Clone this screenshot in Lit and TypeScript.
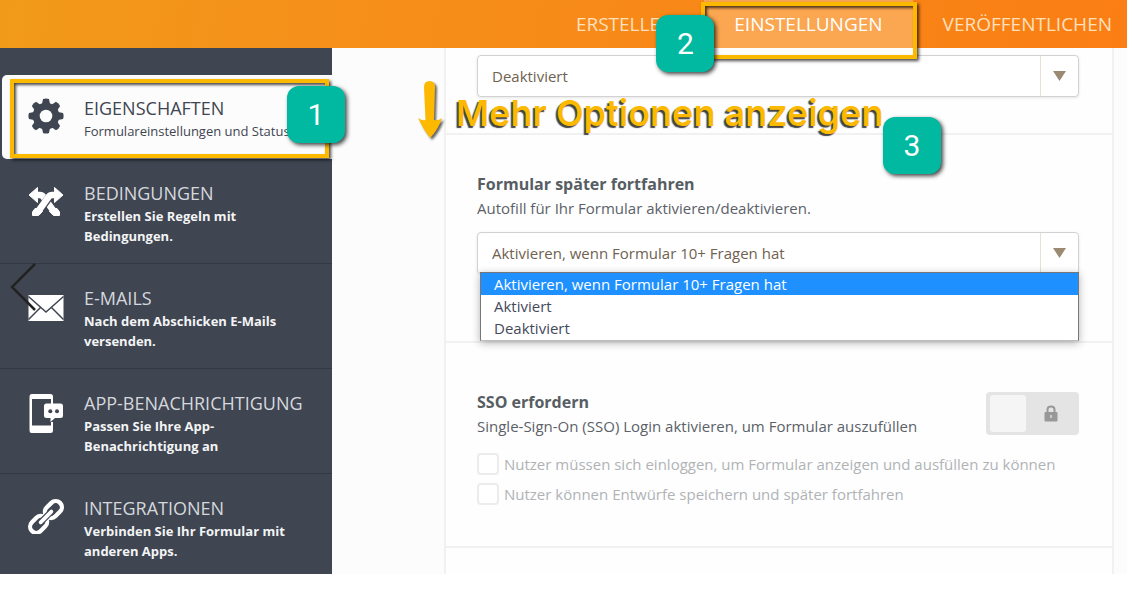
import { LitElement, html, css, svg } from "lit";
import { customElement, property } from "lit/decorators.js";

const icons: Record<string, unknown> = {
  gear: svg`<svg viewBox="0 0 36 36"><g transform="translate(18 18)" fill="currentColor">
    ${[0, 45, 90, 135].map((a) => svg`<path transform="rotate(${a})" d="M-3-17q3-1.200 6 0l1 5v24l-1 5q-3 1.200-6 0l-1-5v-24z"/>`)}
    <circle r="13.300"/></g><circle cx="18" cy="18" r="6.300" fill="#fcfcfc"/></svg>`,
  rules: svg`<svg viewBox="0 -3 36 36"><g fill="none" stroke-linejoin="round">
    <path d="M8 9h4q2 0 3.500 2L27 27" stroke="currentColor" stroke-width="6.500"/>
    <path d="M24 22.500l5 0 2.500 3.500v3.500h-6l-4-4z" fill="currentColor" stroke="currentColor"/>
    <path d="M1 9L9.500 1.500v15z" fill="currentColor" stroke="currentColor"/>
    <path d="M23 10q-1.200 0-2.500 2L13 22.500" stroke="#3f4551" stroke-width="8"/>
    <path d="M28 9h-4q-2 0-3.500 2L9 27" stroke="currentColor" stroke-width="6.500"/>
    <path d="M12 22.500l-5 0-2.500 3.500v3.500h6l4-4z" fill="currentColor" stroke="currentColor"/>
    <path d="M35 9L26.500 1.500v15z" fill="currentColor" stroke="currentColor"/></g></svg>`,
  mail: svg`<svg viewBox="0 0 36 36"><rect x=".5" y="7" width="35" height="26" fill="currentColor"/>
    <path d="M.5 8.500L18 24L35.500 8.500M.5 31.500L12.500 19.500M35.500 31.500L23.500 19.500" fill="none" stroke="#3f4551" stroke-width="1.500"/></svg>`,
  phone: svg`<svg viewBox="0 0 36 40"><path fill="currentColor" fill-rule="evenodd" d="M3.500 1h19q2.500 0 2.500 2.500V11h-2V6H4v26.500h19V29h2v8.500q0 2.500-2.500 2.500h-19Q1.500 40 1.500 37.500v-34Q1.500 1 3.500 1z"/>
    <path fill="currentColor" d="M18.500 10.500h14q2.500 0 2.500 2.500v9.500q0 2.500-2.500 2.500H27l-4.500 4V25h-4Q16 25 16 22.500V13q0-2.500 2.500-2.500z"/>
    <circle cx="22.300" cy="18.300" r="2" fill="#3f4551"/><circle cx="29" cy="18.300" r="2" fill="#3f4551"/></svg>`,
  link: svg`<svg viewBox="0 0 38 38"><g transform="rotate(-45 19 20)" fill="none" stroke="currentColor">
    <rect x="-2" y="13.500" width="20" height="13" rx="6.500" stroke-width="4.500"/>
    <rect x="20" y="13.500" width="20" height="13" rx="6.500" stroke-width="4.500"/>
    <path d="M11.500 20h15" stroke="#3f4551" stroke-width="6.500"/><path d="M11 20h16" stroke-width="4" stroke-linecap="round"/></g></svg>`,
};

const marks = css`
  .frame { position: absolute; border: 4px solid #fdb900; box-shadow: 2px 2px 3px rgba(0,0,0,.7), inset 2px 2px 3px rgba(0,0,0,.7); pointer-events: none; }
  .badge { position: absolute; z-index: 5; display: grid; place-items: center; width: 58px; height: 57px; border-radius: 12px;
    background: #00b9a0; color: #fff; font: 30px/1 Roboto, sans-serif; box-shadow: 2px 2px 4px rgba(0,0,0,.75); }
`;

@customElement("top-tabs")
class TopTabs extends LitElement {
  static styles = [marks, css`
    :host { display: block; background: linear-gradient(100deg, #f19a19, #f68f1a 33%, #fa7e14); }
    .tabs { display: flex; justify-content: flex-end; height: 48px; }
    .tab { position: relative; display: flex; align-items: center; padding: 0 30px; color: #ffe0bd; font-size: 19px; text-decoration: none; }
    .tab:last-child { padding-right: 15px; }
    .on { background: #fba651; color: #fff; }
    .tab .frame { inset: 2px -4px -11px -3px; }
    .tab .badge { left: -48px; top: 15px; }
  `];
  render() {
    return html`<nav class="tabs">
      <a class="tab" href="#erstellen">ERSTELLEN</a>
      <a class="tab on" href="#einstellungen" aria-current="page">EINSTELLUNGEN<span class="frame"></span><span class="badge">2</span></a>
      <a class="tab" href="#publish">VERÖFFENTLICHEN</a>
    </nav>`;
  }
}

const entries = [
  { icon: "gear", title: "EIGENSCHAFTEN", text: "Formulareinstellungen und Status", on: true },
  { icon: "rules", title: "BEDINGUNGEN", text: "Erstellen Sie Regeln mit Bedingungen." },
  { icon: "mail", title: "E-MAILS", text: "Nach dem Abschicken E-Mails versenden." },
  { icon: "phone", title: "APP-BENACHRICHTIGUNG", text: "Passen Sie Ihre App-Benachrichtigung an" },
  { icon: "link", title: "INTEGRATIONEN", text: "Verbinden Sie Ihr Formular mit anderen Apps." },
];

@customElement("side-menu")
class SideMenu extends LitElement {
  static styles = [marks, css`
    :host { display: block; position: relative; background: #3f4551; padding-top: 27px; }
    .item { display: grid; grid-template-columns: 38px 1fr; column-gap: 18px; padding: 22px 28px 17px; border-bottom: 1px solid #323844; color: #fff; text-decoration: none; }
    .item:last-of-type { border-bottom: 0; padding-bottom: 13px; }
    .on { position: relative; margin-left: 2px; padding: 21px 0 18px 26px; border: 0; border-radius: 5px 0 0 5px; background: #fcfcfc; color: #3f4551; }
    .icon svg { display: block; width: 36px; }
    .icon { padding-top: 2px; }
    .title { display: block; font-size: 18px; line-height: 25px; color: #d5d8dd; white-space: nowrap; }
    .text { display: block; max-width: 205px; font-size: 13px; line-height: 20px; font-weight: 700; color: #f3f4f5; }
    .on .title { color: #3f4551; font-weight: 500; }
    .on .text { color: #3f4551; font-weight: 500; white-space: nowrap; overflow: hidden; }
    .on .frame { inset: 4px 3px 1px 8px; }
    .on .badge { right: -13px; top: 11px; }
    .back { position: absolute; left: 8px; top: 214px; width: 30px; height: 50px; padding: 0; border: 0; background: none; }
  `];
  render() {
    return html`<nav>
      ${entries.map((e) => html`<a class="item ${e.on ? "on" : ""}" href="#${e.icon}">
        <span class="icon">${icons[e.icon]}</span>
        <span><span class="title">${e.title}</span><span class="text">${e.text}</span></span>
        ${e.on ? html`<span class="frame"></span><span class="badge">1</span>` : ""}
      </a>`)}
      </nav>
      <button class="back" aria-label="Zurück"><svg width="30" height="50" viewBox="0 0 30 50"><path d="M27 2L4 25L27 48" fill="none" stroke="#222" stroke-width="2.500"/></svg></button>`;
  }
}

@customElement("drop-down")
class DropDown extends LitElement {
  @property() label = "";
  @property({ type: Array }) options: string[] = [];
  @property({ type: Boolean }) open = false;
  static styles = css`
    :host { display: block; position: relative; }
    .box { display: grid; grid-template-columns: 1fr 38px; height: 42px; box-sizing: border-box; border: 1px solid #d2d2d2; border-radius: 4px; background: #fff; box-shadow: 0 1px 3px rgba(0,0,0,.1); }
    select { grid-area: 1 / 1 / 2 / 3; appearance: none; width: 100%; border: 0; padding: 0 52px 0 14px; background: none; color: #6f6250; font: inherit; }
    .arrow { grid-area: 1 / 2; display: grid; place-items: center; border-left: 1px solid #e8e0d8; pointer-events: none; }
    .menu { position: absolute; z-index: 3; left: 3px; right: 0; top: 40px; margin: 0; padding: 0 0 1px; list-style: none; border: 1px solid #777; border-bottom-color: #bbb; background: #fff; color: #444a5c; box-shadow: 0 2px 8px rgba(0,0,0,.3); }
    .menu li { padding: 0 13px; line-height: 22px; }
    .menu .sel { background: #1e90ff; color: #fff; }
  `;
  render() {
    return html`<div class="box">
        <select aria-label=${this.label}>${this.options.map((o) => html`<option>${o}</option>`)}</select>
        <span class="arrow"><svg width="13" height="10"><path d="M0 0h13L6.500 10z" fill="#9b8a72"/></svg></span>
      </div>
      ${this.open ? html`<ul class="menu" role="listbox" aria-label=${this.label}>
        ${this.options.map((o, i) => html`<li role="option" class=${i ? "" : "sel"}>${o}</li>`)}</ul>` : ""}`;
  }
}

@customElement("app-root")
class AppRoot extends LitElement {
  static styles = [marks, css`
    :host { display: block; background: #fff; font-family: "Open Sans", "Noto Sans", sans-serif; font-size: 15px; color: #5b6168; overflow: hidden; }
    top-tabs { position: relative; z-index: 2; }
    .body { display: grid; grid-template-columns: 332px 1fr; }
    side-menu { z-index: 1; }
    .main { background: #fcfcfc; padding: 0 13px 0 112px; }
    .cards { position: relative; background: #fefefe; border: solid #f1f1f1; border-width: 0 2px; }
    .card { padding: 37px 33px 36px 31px; border-bottom: 2px solid #f1f1f1; }
    .first { padding-top: 7px; }
    .resume { padding-bottom: 67px; }
    .sso { padding-top: 47px; padding-bottom: 37px; }
    .last { border: 0; padding: 13px; }
    h2 { margin: 0; font-size: 16px; line-height: 24px; font-weight: 700; color: #565d63; }
    p { margin: 0; line-height: 24px; }
    .resume drop-down { margin-top: 12px; }
    .row { display: flex; justify-content: space-between; align-items: flex-start; padding-bottom: 11px; }
    .toggle { appearance: none; display: grid; grid-template-columns: 36px 1fr; align-items: center; justify-items: center; width: 93px; height: 43px; margin: 2px 0 0; padding: 3px 4px; border: 0; border-radius: 4px; background: #e4e4e4; }
    .knob { width: 100%; height: 100%; border-radius: 3px; background: #f5f5f5; }
    .check { display: flex; align-items: center; gap: 5px; height: 30px; color: #b0b3b6; }
    .check input { appearance: none; box-sizing: border-box; flex: none; width: 22px; height: 22px; margin: 0; border: 2px solid #ececec; border-radius: 4px; background: #fff; }
    .note { position: absolute; z-index: 2; left: 10px; top: 43px; color: #fdb900; font: 600 36px/44px Inter, sans-serif; white-space: nowrap; text-shadow: -2px 2px 1px #444; }
    .down { position: absolute; z-index: 2; left: -29px; top: 32px; filter: drop-shadow(2px 2px 1px rgba(0,0,0,.6)); }
    .cards .badge { left: 437px; top: 69px; }
  `];
  render() {
    return html`<top-tabs></top-tabs>
      <div class="body">
        <side-menu></side-menu>
        <main class="main"><div class="cards">
          <section class="card first"><drop-down label="Status" .options=${["Deaktiviert", "Aktiviert"]}></drop-down></section>
          <section class="card resume">
            <h2>Formular später fortfahren</h2>
            <p>Autofill für Ihr Formular aktivieren/deaktivieren.</p>
            <drop-down open label="Formular später fortfahren" .options=${["Aktivieren, wenn Formular 10+ Fragen hat", "Aktiviert", "Deaktiviert"]}></drop-down>
          </section>
          <section class="card sso">
            <div class="row">
              <div><h2>SSO erfordern</h2><p>Single-Sign-On (SSO) Login aktivieren, um Formular auszufüllen</p></div>
              <button class="toggle" role="switch" aria-checked="false" aria-label="SSO erfordern"><span class="knob"></span>
                <svg width="14" height="17" viewBox="0 0 14 17"><path d="M3.500 8V4.500q0-3 3.500-3t3.500 3V8" fill="none" stroke="#989898" stroke-width="2"/><rect x=".5" y="7" width="13" height="9.500" rx="1" fill="#989898"/><rect x="6.300" y="10" width="1.500" height="3" fill="#ddd"/></svg>
              </button>
            </div>
            <label class="check"><input type="checkbox">Nutzer müssen sich einloggen, um Formular anzeigen und ausfüllen zu können</label>
            <label class="check"><input type="checkbox">Nutzer können Entwürfe speichern und später fortfahren</label>
          </section>
          <section class="card last"></section>
          <svg class="down" width="26" height="60" viewBox="0 0 26 60"><path d="M7 7Q7 1 12.500 1T18 7L17 40Q21 41 25 38Q21 50 13 58Q6 49 1 38Q5 41 8.500 40z" fill="#fdb900"/></svg>
          <span class="note">Mehr Optionen anzeigen</span>
          <span class="badge">3</span>
        </div></main>
      </div>`;
  }
}
